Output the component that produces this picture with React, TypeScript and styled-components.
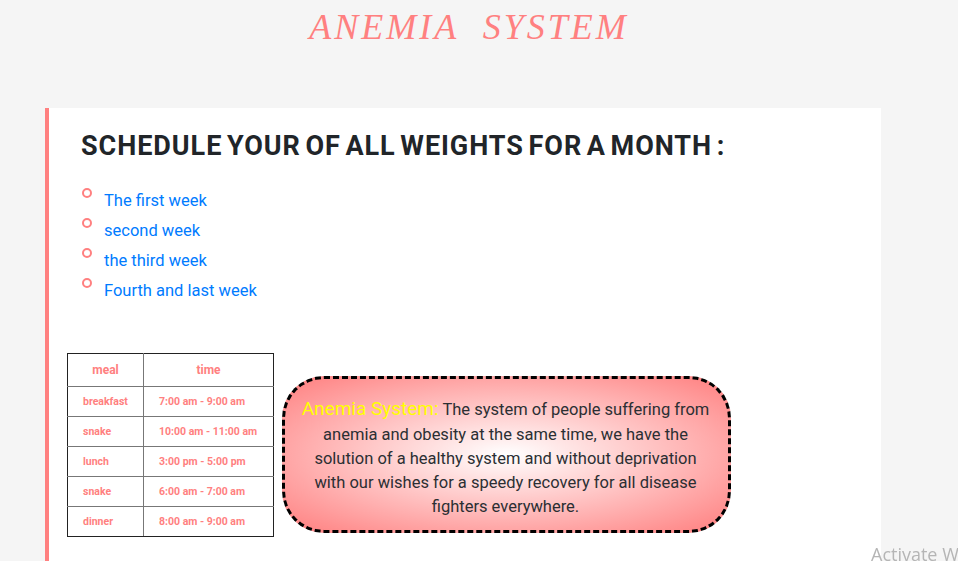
import React from 'react';
import styled, { createGlobalStyle } from 'styled-components';

const WEEKS = ['The first week', 'second week', 'the third week', 'Fourth and last week'];

const MEALS = [
  { meal: 'breakfast', time: '7:00 am - 9:00 am' },
  { meal: 'snake', time: '10:00 am - 11:00 am' },
  { meal: 'lunch', time: '3:00 pm - 5:00 pm' },
  { meal: 'snake', time: '6:00 am - 7:00 am' },
  { meal: 'dinner', time: '8:00 am - 9:00 am' },
];

const PINK = '#ff8080';
const DARK_LINE = '#222';
const GREY_LINE = '#777';

const GlobalStyle = createGlobalStyle`
  html, body {
    margin: 0;
    height: 561px;
    overflow: hidden;
    background: #f5f5f5;
    font-family: Roboto, "Liberation Sans", sans-serif;
  }
`;

const Title = styled.h1`
  margin: 0;
  height: 108px;
  padding: 5px 20px 0 0;
  box-sizing: border-box;
  text-align: center;
  font-family: "Z003", "URW Chancery L", "Liberation Serif", serif;
  font-style: italic;
  font-weight: 400;
  font-size: 36px;
  line-height: 44px;
  letter-spacing: 3px;
  word-spacing: 12px;
  color: ${PINK};
`;

const Card = styled.section`
  width: 832px;
  height: 453px;
  margin-left: 45px;
  border-left: 4px solid ${PINK};
  background: #fff;
`;

const Heading = styled.h2`
  margin: 0;
  padding: 21px 0 0 32px;
  font-size: 27px;
  line-height: 34px;
  font-weight: 700;
  letter-spacing: 0.95px;
  word-spacing: -3px;
  color: #212529;
`;

const WeekList = styled.ul`
  list-style: none;
  margin: 0;
  padding: 22px 0 0 33px;
`;

const WeekItem = styled.li`
  display: flex;
  align-items: flex-start;
  gap: 12px;
  height: 30px;
`;

const Bullet = styled.span`
  width: 10px;
  height: 10px;
  margin-top: 3px;
  box-sizing: border-box;
  border: 2px solid ${PINK};
  border-radius: 50%;
`;

const WeekLink = styled.a`
  padding-top: 1px;
  font-size: 16.5px;
  line-height: 30px;
  color: #007bff;
`;

const Bottom = styled.div`
  display: flex;
  align-items: flex-start;
  gap: 8px;
  padding: 48px 0 0 18px;
`;

const MealTable = styled.table`
  width: 207px;
  border-collapse: collapse;
  color: ${PINK};
  font-size: 10.5px;
  font-weight: 700;
`;

const HeadCell = styled.th`
  height: 32px;
  padding: 0;
  border: 1px solid ${GREY_LINE};
  border-top-color: ${DARK_LINE};
  font-size: 12px;
  font-weight: 700;
  text-align: center;

  &:first-child {
    border-left-color: ${DARK_LINE};
  }

  &:last-child {
    border-right-color: ${DARK_LINE};
  }
`;

const Cell = styled.td`
  height: 29px;
  padding: 0 0 0 15px;
  border: 1px solid ${GREY_LINE};

  &:first-child {
    border-left-color: ${DARK_LINE};
  }

  &:last-child {
    border-right-color: ${DARK_LINE};
  }

  tr:last-child > & {
    border-bottom-color: ${DARK_LINE};
  }
`;

const Callout = styled.p`
  width: 449px;
  height: 157px;
  box-sizing: border-box;
  margin: 23px 0 0;
  padding: 16px 17px 0 15px;
  border: 3px dashed #000;
  border-radius: 42px;
  background: radial-gradient(ellipse at center, #fff 0%, ${PINK} 100%);
  color: #2b2f33;
  font-size: 16.5px;
  line-height: 24px;
  text-align: center;
`;

const Brand = styled.span`
  color: #ffff00;
  font-size: 19px;
  line-height: 28px;
`;

const Watermark = styled.div`
  position: fixed;
  left: 871px;
  top: 542px;
  white-space: nowrap;
  font-family: "Open Sans", sans-serif;
  font-size: 18px;
  line-height: 24px;
  color: #b5b5b5;
`;

export default function App() {
  return (
    <>
      <GlobalStyle />
      <Title>ANEMIA SYSTEM</Title>
      <Card>
        <Heading>SCHEDULE YOUR OF ALL WEIGHTS FOR A MONTH :</Heading>
        <WeekList>
          {WEEKS.map((week) => (
            <WeekItem key={week}>
              <Bullet />
              <WeekLink>{week}</WeekLink>
            </WeekItem>
          ))}
        </WeekList>
        <Bottom>
          <MealTable>
            <colgroup>
              <col width="76" />
              <col />
            </colgroup>
            <thead>
              <tr>
                <HeadCell>meal</HeadCell>
                <HeadCell>time</HeadCell>
              </tr>
            </thead>
            <tbody>
              {MEALS.map(({ meal, time }) => (
                <tr key={time}>
                  <Cell>{meal}</Cell>
                  <Cell>{time}</Cell>
                </tr>
              ))}
            </tbody>
          </MealTable>
          <Callout>
            <Brand>Anemia System:</Brand> The system of people suffering from anemia and obesity at the same time, we
            have the solution of a healthy system and without deprivation with our wishes for a speedy recovery for all
            disease fighters everywhere.
          </Callout>
        </Bottom>
      </Card>
      <Watermark>Activate Windows</Watermark>
    </>
  );
}
